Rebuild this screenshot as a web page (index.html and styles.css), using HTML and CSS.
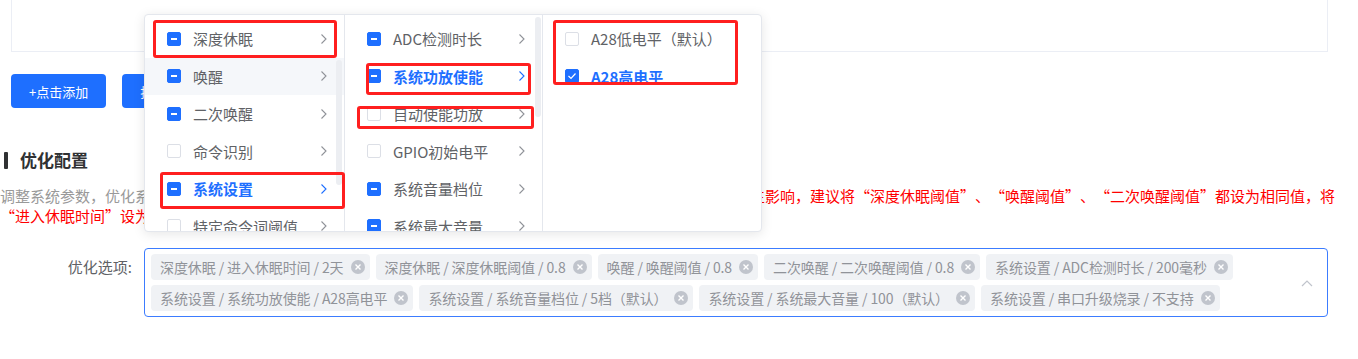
FILE: index.html
```html
<!DOCTYPE html>
<html lang="zh-CN">
<head>
    <meta charset="UTF-8">
    <meta name="viewport" content="width=device-width, initial-scale=1.0">
    <title>优化配置</title>
    <link rel="stylesheet" href="styles.css">
</head>
<body>

    <div class="table-card">
        <div class="empty">暂无数据</div>
    </div>

    <div class="actions">
        <button class="btn">+点击添加</button>
        <button class="btn">批量导入</button>
    </div>

    <h3 class="section-title">优化配置</h3>

    <p class="desc"><span class="muted">调整系统参数，优化系统运行表现。</span><span class="warn">注意：这三个阈值之间相互关联，数值设置不一致时会对设备唤醒的稳定性产生影响，建议将“深度休眠阈值”、“唤醒阈值”、“二次唤醒阈值”都设为相同值，将“进入休眠时间”设为合适的时长。</span></p>

    <div class="form-row">
        <label>优化选项:</label>
        <div class="select">
            <span class="tag">深度休眠 / 进入休眠时间 / 2天<i class="tag-close"><svg viewBox="0 0 14 14"><path d="M4.5 4.5 L9.5 9.5 M9.5 4.5 L4.5 9.5"/></svg></i></span>
            <span class="tag">深度休眠 / 深度休眠阈值 / 0.8<i class="tag-close"><svg viewBox="0 0 14 14"><path d="M4.5 4.5 L9.5 9.5 M9.5 4.5 L4.5 9.5"/></svg></i></span>
            <span class="tag">唤醒 / 唤醒阈值 / 0.8<i class="tag-close"><svg viewBox="0 0 14 14"><path d="M4.5 4.5 L9.5 9.5 M9.5 4.5 L4.5 9.5"/></svg></i></span>
            <span class="tag">二次唤醒 / 二次唤醒阈值 / 0.8<i class="tag-close"><svg viewBox="0 0 14 14"><path d="M4.5 4.5 L9.5 9.5 M9.5 4.5 L4.5 9.5"/></svg></i></span>
            <span class="tag">系统设置 / ADC检测时长 / 200毫秒<i class="tag-close"><svg viewBox="0 0 14 14"><path d="M4.5 4.5 L9.5 9.5 M9.5 4.5 L4.5 9.5"/></svg></i></span>
            <span class="tag">系统设置 / 系统功放使能 / A28高电平<i class="tag-close"><svg viewBox="0 0 14 14"><path d="M4.5 4.5 L9.5 9.5 M9.5 4.5 L4.5 9.5"/></svg></i></span>
            <span class="tag">系统设置 / 系统音量档位 / 5档（默认）<i class="tag-close"><svg viewBox="0 0 14 14"><path d="M4.5 4.5 L9.5 9.5 M9.5 4.5 L4.5 9.5"/></svg></i></span>
            <span class="tag">系统设置 / 系统最大音量 / 100（默认）<i class="tag-close"><svg viewBox="0 0 14 14"><path d="M4.5 4.5 L9.5 9.5 M9.5 4.5 L4.5 9.5"/></svg></i></span>
            <span class="tag">系统设置 / 串口升级烧录 / 不支持<i class="tag-close"><svg viewBox="0 0 14 14"><path d="M4.5 4.5 L9.5 9.5 M9.5 4.5 L4.5 9.5"/></svg></i></span>
            <svg class="caret" viewBox="0 0 12 8"><path d="M1 7 L6 2 L11 7"/></svg>
        </div>
    </div>

    <!-- 级联下拉面板 -->
    <div class="cascader">
        <ul class="cas-col col-1">
            <li class="cas-item"><span class="cb half"></span><span class="label">深度休眠</span><svg class="arrow" viewBox="0 0 8 12"><path d="M1.5 1.5 L6 6 L1.5 10.5"/></svg></li>
            <li class="cas-item hover"><span class="cb half"></span><span class="label">唤醒</span><svg class="arrow" viewBox="0 0 8 12"><path d="M1.5 1.5 L6 6 L1.5 10.5"/></svg></li>
            <li class="cas-item"><span class="cb half"></span><span class="label">二次唤醒</span><svg class="arrow" viewBox="0 0 8 12"><path d="M1.5 1.5 L6 6 L1.5 10.5"/></svg></li>
            <li class="cas-item"><span class="cb"></span><span class="label">命令识别</span><svg class="arrow" viewBox="0 0 8 12"><path d="M1.5 1.5 L6 6 L1.5 10.5"/></svg></li>
            <li class="cas-item active"><span class="cb half"></span><span class="label">系统设置</span><svg class="arrow" viewBox="0 0 8 12"><path d="M1.5 1.5 L6 6 L1.5 10.5"/></svg></li>
            <li class="cas-item"><span class="cb"></span><span class="label">特定命令词阈值</span><svg class="arrow" viewBox="0 0 8 12"><path d="M1.5 1.5 L6 6 L1.5 10.5"/></svg></li>
            <div class="thumb"></div>
        </ul>
        <ul class="cas-col col-2">
            <li class="cas-item"><span class="cb half"></span><span class="label">ADC检测时长</span><svg class="arrow" viewBox="0 0 8 12"><path d="M1.5 1.5 L6 6 L1.5 10.5"/></svg></li>
            <li class="cas-item active"><span class="cb half"></span><span class="label">系统功放使能</span><svg class="arrow" viewBox="0 0 8 12"><path d="M1.5 1.5 L6 6 L1.5 10.5"/></svg></li>
            <li class="cas-item"><span class="cb"></span><span class="label">自动使能功放</span><svg class="arrow" viewBox="0 0 8 12"><path d="M1.5 1.5 L6 6 L1.5 10.5"/></svg></li>
            <li class="cas-item"><span class="cb"></span><span class="label">GPIO初始电平</span><svg class="arrow" viewBox="0 0 8 12"><path d="M1.5 1.5 L6 6 L1.5 10.5"/></svg></li>
            <li class="cas-item"><span class="cb half"></span><span class="label">系统音量档位</span><svg class="arrow" viewBox="0 0 8 12"><path d="M1.5 1.5 L6 6 L1.5 10.5"/></svg></li>
            <li class="cas-item"><span class="cb half"></span><span class="label">系统最大音量</span><svg class="arrow" viewBox="0 0 8 12"><path d="M1.5 1.5 L6 6 L1.5 10.5"/></svg></li>
            <div class="thumb"></div>
        </ul>
        <ul class="cas-col col-3">
            <li class="cas-item"><span class="cb"></span><span class="label">A28低电平（默认）</span></li>
            <li class="cas-item active"><span class="cb checked"><svg viewBox="0 0 14 14"><path d="M3.5 7 L6 9.5 L10.5 4.5"/></svg></span><span class="label">A28高电平</span></li>
        </ul>
    </div>

    <!-- 标注框 -->
    <div class="mark mark-1"></div>
    <div class="mark mark-2"></div>
    <div class="mark mark-3"></div>
    <div class="mark mark-4"></div>
    <div class="mark mark-5"></div>

</body>
</html>
```

FILE: styles.css
```css
* {
    box-sizing: border-box;
}
body {
    margin: 0;
    width: 1358px;
    height: 359px;
    overflow: hidden;
    position: relative;
    font-family: "Noto Sans CJK SC", "Noto Sans", sans-serif;
    color: #606266;
    background: #fff;
    text-spacing-trim: space-all;
}
.table-card {
    margin-left: 11px;
    width: 1317px;
    height: 52px;
    border: 1px solid #ebeef5;
    border-top: none;
    text-align: center;
}
.table-card .empty {
    padding-top: 12px;
    font-size: 14px;
    line-height: 18px;
    color: #909399;
}
.actions {
    display: flex;
    gap: 16px;
    margin: 22px 0 0 11px;
}
.btn {
    height: 34px;
    padding: 0 18px;
    border: none;
    border-radius: 4px;
    background: #1e6fff;
    color: #fff;
    font-size: 13px;
    font-family: inherit;
}
.section-title {
    display: flex;
    align-items: center;
    gap: 12px;
    margin: 42px 0 0 4px;
    font-size: 17px;
    line-height: 20px;
    font-weight: bold;
    color: #303133;
}
.section-title::before {
    content: "";
    width: 4px;
    height: 17px;
    border-radius: 1px;
    background: #303133;
}
.desc {
    margin: 16px 0 0;
    width: 1352px;
    font-size: 15px;
    line-height: 20px;
    font-variant-east-asian: full-width;
}
.desc .muted {
    color: #999;
}
.desc .warn {
    color: #ff0000;
}
.form-row {
    display: flex;
    align-items: flex-start;
    margin-top: 22px;
}
.form-row label {
    width: 132px;
    margin-right: 12px;
    text-align: right;
    font-size: 15px;
    line-height: 38px;
    color: #606266;
}
.select {
    position: relative;
    display: flex;
    flex-wrap: wrap;
    gap: 5px 6px;
    width: 1184px;
    min-height: 68px;
    padding: 5px 30px 5px 6px;
    border: 1px solid #3c7cff;
    border-radius: 4px;
}
.tag {
    display: inline-flex;
    align-items: center;
    gap: 7px;
    height: 26px;
    padding: 0 5px 0 9px;
    border-radius: 4px;
    background: #f0f2f5;
    color: #909399;
    font-size: 14px;
    letter-spacing: -0.1px;
    white-space: nowrap;
}
.tag-close {
    display: inline-flex;
    width: 14px;
    height: 14px;
    border-radius: 50%;
    background: #c0c4cc;
}
.tag-close svg {
    width: 14px;
    height: 14px;
    fill: none;
    stroke: #fff;
    stroke-width: 1.4;
}
.caret {
    position: absolute;
    right: 14px;
    top: 30px;
    width: 12px;
    height: 8px;
    fill: none;
    stroke: #c0c4cc;
    stroke-width: 1.2;
}

/* cascader */
.cascader {
    position: absolute;
    left: 144px;
    top: 14px;
    width: 618px;
    height: 218px;
    display: flex;
    background: #fff;
    border: 1px solid #e4e7ed;
    border-radius: 4px;
    box-shadow: 0 2px 12px rgba(0, 0, 0, 0.1);
    overflow: hidden;
}
.cas-col {
    position: relative;
    margin: 0;
    padding: 5px 0 0;
    list-style: none;
    border-right: 1px solid #e4e7ed;
    overflow: hidden;
}
.col-1 {
    width: 200px;
}
.col-2 {
    width: 198px;
}
.col-3 {
    flex: 1;
    border-right: none;
}
.cas-item {
    display: flex;
    align-items: center;
    height: 37.5px;
    padding: 0 16px 0 22px;
    font-size: 15px;
    color: #606266;
    white-space: nowrap;
}
.cas-item.hover {
    background: #f5f7fa;
}
.cas-item.active {
    color: #1e6fff;
    font-weight: bold;
}
.cas-item .label {
    margin-left: 12px;
}
.arrow {
    margin-left: auto;
    width: 8px;
    height: 12px;
    fill: none;
    stroke: #909399;
    stroke-width: 1.1;
}
.cas-item.active .arrow {
    stroke: #1e6fff;
}
.cb {
    display: inline-flex;
    flex-shrink: 0;
    width: 14px;
    height: 14px;
    border: 1px solid #dcdfe6;
    border-radius: 2px;
    background: #fff;
    position: relative;
}
.cb.half,
.cb.checked {
    border-color: #1e6fff;
    background: #1e6fff;
}
.cb.half::after {
    content: "";
    position: absolute;
    left: 3px;
    top: 5px;
    width: 6px;
    height: 2px;
    background: #fff;
}
.cb.checked svg {
    position: absolute;
    left: -1px;
    top: -1px;
    width: 14px;
    height: 14px;
    fill: none;
    stroke: #fff;
    stroke-width: 1.2;
}
.thumb {
    position: absolute;
    width: 6px;
    border-radius: 3px;
    background: #eceef2;
}
.col-1 .thumb {
    right: 2px;
    top: 45px;
    height: 125px;
}
.col-2 .thumb {
    right: 1px;
    top: 2px;
    height: 100px;
}

/* 截图标注 */
.mark {
    position: absolute;
    border: 3px solid #ff1f1f;
    border-radius: 3px;
}
.mark-1 {
    left: 153px;
    top: 20px;
    width: 184px;
    height: 38px;
}
.mark-2 {
    left: 160px;
    top: 172px;
    width: 185px;
    height: 37px;
}
.mark-3 {
    left: 366px;
    top: 63px;
    width: 165px;
    height: 32px;
}
.mark-4 {
    left: 357px;
    top: 106px;
    width: 177px;
    height: 23px;
}
.mark-5 {
    left: 553px;
    top: 20px;
    width: 185px;
    height: 65px;
}
```
